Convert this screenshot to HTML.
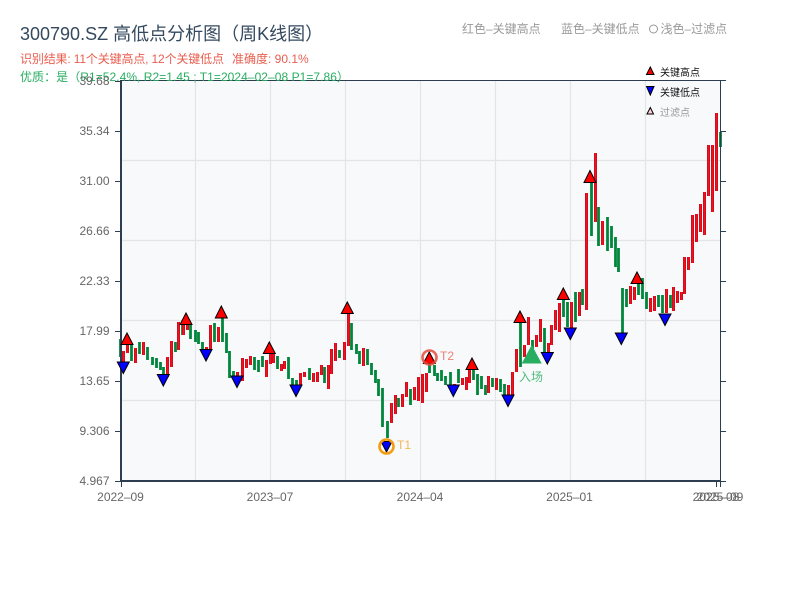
<!DOCTYPE html>
<html><head><meta charset="utf-8"><style>
html,body{margin:0;padding:0;background:#fff}
svg{display:block}
text{font-family:"Liberation Sans","Noto Sans CJK SC",sans-serif;white-space:pre}
</style></head><body>
<svg width="800" height="600" viewBox="0 0 800 600" xmlns="http://www.w3.org/2000/svg">
<rect x="121" y="81" width="600" height="400" fill="#f8f9fa"/>
<path d="M195.5 81V481M270.5 81V481M345.5 81V481M420.5 81V481M495.5 81V481M570.5 81V481M645.5 81V481M121 160.5H720M121 240.5H720M121 320.5H720M121 400.5H720" stroke="#e2e4e8" stroke-width="1.2" fill="none"/>
<defs>
<path id="r" d="M123 351V362M127 343V353M135 348V363M143 342V355M167 357V377M171 341V367M178 322V350M183 323V335M187 323V330M206 347V352M210 325V349M218 327V342M237 372V380M242 358V381M246 359V368M250 356V365M266 360V377M270 353V364M273 353V363M281 364V371M284 361V369M300 373V385M304 372V377M313 373V382M317 372V382M321 365V375M328 365V389M331 349V374M335 343V361M344 342V360M348 310V346M363 348V366M391 403V423M395 395V414M402 394V407M406 382V397M414 387V400M418 377V401M422 374V403M426 373V392M454 384V392M462 378V385M466 377V390M469 370V383M488 376V393M496 378V390M508 385V397M512 372V395M516 349V372M524 345V357M528 317V345M536 335V347M540 319V342M548 343V353M551 325V345M555 310V330M559 303V332M571 302V328M579 292V316M586 193V310M595 153V222M602 221V245M630 286V304M634 287V300M650 298V312M654 296V311M666 289V313M673 287V311M677 291V303M681 292V300M684 257V294M688 257V270M692 215V263M696 214V242M700 204V232M704 192V235M708 145V196M712 145V212M716 113V191"/>
</defs>
<g transform="translate(.5 0)">
<path fill="none" stroke="#00873c" stroke-width="2.8" d="M120 339V357M131 345V361M139 342V354M147 347V360M152 357V365M156 358V368M160 362V370M163 367V375M175 342V352M182 325V335M190 325V339M195 330V342M198 332V344M202 342V350M214 323V342M222 318V342M226 333V353M229 351V378M233 371V379M254 357V370M258 360V372M262 356V367M277 356V369M288 357V379M292 378V387M296 380V390M309 368V380M324 367V383M339 350V358M351 323V350M356 344V354M359 351V364M367 349V365M371 363V375M375 370V383M378 379V396M382 388V427M387 421V438M398 398V407M410 389V405M429 362V373M434 365V376M437 373V381M441 370V381M445 376V385M450 372V385M458 369V383M473 368V380M477 374V395M481 376V389M485 385V395M492 378V387M500 379V392M504 384V395M520 322V367M532 340V355M544 328V353M563 300V317M567 302V327M575 292V322M582 289V305M591 182V236M598 207V246M607 217V251M611 226V248M615 237V267M618 248V272M622 288V333M626 289V307M638 283V295M642 278V299M646 292V309M658 295V307M662 295V313M670 295V308M720 132V147"/>
<use href="#r" fill="none" stroke="#cf0f1f" stroke-width="3"/>
<use href="#r" fill="none" stroke="#f5101c" stroke-width="1"/>
</g>
<path d="M120 80.5H726M720.5 81V481M721 131.5H726M721 181.5H726M721 231.5H726M721 281.5H726M721 331.5H726M721 381.5H726M721 431.5H726M721 481.5H726M716.5 482V487M720.5 482V487" stroke="#2c3e50" stroke-width="1" fill="none"/>
<path d="M115 81.5H121M115 131.5H121M115 181.5H121M115 231.5H121M115 281.5H121M115 331.5H121M115 381.5H121M115 431.5H121M115 481.5H121M121.5 482V487" stroke="#2c3e50" stroke-width="1" fill="none"/>
<path d="M121 80V482M120 481H721" stroke="#2c3e50" stroke-width="2" fill="none"/>
<g fill="#ff0000" stroke="#000" stroke-width="1">
<path d="M127 333L133 344.5H121Z"/><path d="M186 313L192 324.5H180Z"/><path d="M221.3 306L227.3 318H215.3Z"/><path d="M269.3 342L275.3 353.5H263.3Z"/><path d="M347.3 302L353.3 313.5H341.3Z"/><path d="M429.3 352L435.3 363.5H423.3Z"/><path d="M472 358L478 369.5H466Z"/><path d="M520 311L526 322.5H514Z"/><path d="M563.3 288L569.3 299.5H557.3Z"/><path d="M590 170.5L596 182.5H584Z"/><path d="M637 272L643 283.5H631Z"/>
</g>
<g fill="#0000ff" stroke="#000" stroke-width="1">
<path d="M123.3 373.5L117.3 362H129.3Z"/><path d="M163.3 386L157.3 374.5H169.3Z"/><path d="M206 361L200 349.5H212Z"/><path d="M237 387.5L231 376H243Z"/><path d="M296 396.5L290 385H302Z"/><path d="M386.5 452L381 441.5H392Z"/><path d="M453.3 396.5L447.3 385H459.3Z"/><path d="M508 406.5L502 395H514Z"/><path d="M547.3 364L541.3 352.5H553.3Z"/><path d="M570.3 339.5L564.3 328H576.3Z"/><path d="M621.3 344.5L615.3 333H627.3Z"/><path d="M665 325.5L659 314H671Z"/>
</g>
<circle cx="386.5" cy="446.5" r="7" fill="none" stroke="#f39c12" stroke-width="2.6"/>
<circle cx="429.5" cy="357.5" r="7" fill="none" stroke="#e74c3c" stroke-width="2.6" opacity=".85"/>
<text x="397" y="449" font-size="12" fill="#f39c12" opacity=".7">T1</text>
<text x="440" y="360" font-size="12" fill="#e74c3c" opacity=".7">T2</text>
<path d="M531.7 345L541.7 363.5H521.7Z" fill="#27ae60"/>
<text x="519" y="381" font-size="12" fill="#27ae60" opacity=".8">入场</text>
<text x="20" y="40" font-size="18" fill="#34495e">300790.SZ 高低点分析图（周K线图）</text>
<text x="20" y="63" font-size="12" fill="#e74c3c" opacity=".9" textLength="204" lengthAdjust="spacing">识别结果: 11个关键高点, 12个关键低点</text>
<text x="232" y="63" font-size="12" fill="#e74c3c" opacity=".9">准确度: 90.1%</text>
<text x="20" y="81" font-size="12" fill="#27ae60" textLength="329" lengthAdjust="spacing">优质：是（R1=52.4%, R2=1.45 ; T1=2024–02–08 P1=7.86）</text>
<g font-size="12" fill="#999">
<text x="462" y="33">红色–关键高点</text>
<text x="561" y="33">蓝色–关键低点</text>
<text x="660.5" y="33">浅色–过滤点</text>
</g>
<circle cx="653.5" cy="29" r="4" fill="#fff" stroke="#999" stroke-width="1"/>
<path d="M650.3 67L654 74.5H646.5Z" fill="#f00" stroke="#000"/>
<path d="M650.3 95L654 86.5H646.5Z" fill="#00f" stroke="#000"/>
<path d="M650.3 107.5L653.5 114H647Z" fill="#ffd0d0" stroke="#000"/>
<g font-size="10">
<text x="660" y="76" fill="#111">关键高点</text>
<text x="660" y="96" fill="#111">关键低点</text>
<text x="660" y="116" fill="#999">过滤点</text>
</g>
<g font-size="12" fill="#666" text-anchor="end">
<text x="109.5" y="85">39.68</text><text x="109.5" y="135">35.34</text><text x="109.5" y="185">31.00</text><text x="109.5" y="235">26.66</text><text x="109.5" y="285">22.33</text><text x="109.5" y="335">17.99</text><text x="109.5" y="385">13.65</text><text x="109.5" y="435">9.306</text><text x="109.5" y="485">4.967</text>
</g>
<g font-size="12" fill="#666" text-anchor="middle">
<text x="120.5" y="501">2022–09</text><text x="270" y="501">2023–07</text><text x="420" y="501">2024–04</text><text x="569.5" y="501">2025–01</text><text x="716" y="501">2025–08</text><text x="720" y="501">2025–09</text>
</g>
</svg>
</body></html>
